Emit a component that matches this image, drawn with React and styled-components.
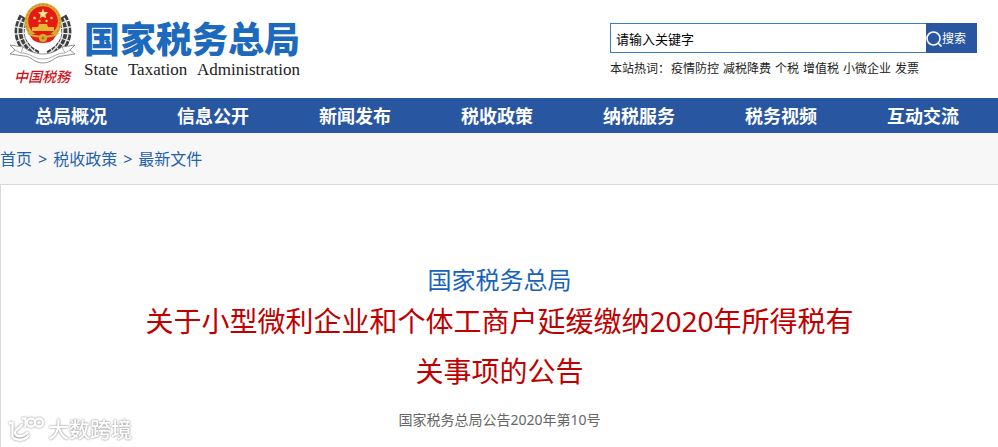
import styled, { createGlobalStyle } from 'styled-components';

const GlobalStyle = createGlobalStyle`
  * {
    box-sizing: border-box;
  }

  body {
    margin: 0;
    background: #fff;
    color: #222;
    font-family: 'Noto Sans', 'Noto Sans CJK SC', sans-serif;
    font-size: 12px;
  }

  a {
    color: inherit;
    text-decoration: none;
  }
`;

const Page = styled.div`
  display: flex;
  flex-direction: column;
  min-height: 100vh;
`;

const Header = styled.header`
  display: flex;
  justify-content: space-between;
  align-items: flex-start;
  height: 98px;
  padding: 0 21px 0 8px;
`;

const Brand = styled.a`
  display: flex;
  gap: 8px;
`;

const Badge = styled.span`
  display: flex;
  flex-direction: column;
  align-items: center;
  width: 68px;
  padding-top: 2px;
`;

const BadgeText = styled.span`
  color: #d0141c;
  font-family: 'Liberation Serif', 'Noto Sans CJK SC', serif;
  font-size: 14px;
  font-style: italic;
  font-weight: 500;
  line-height: 24px;
`;

const BrandText = styled.span`
  display: flex;
  flex-direction: column;
  padding-top: 20px;
`;

const SiteName = styled.span`
  color: #1c69be;
  font-family: 'Liberation Sans', 'Noto Sans CJK SC', sans-serif;
  font-size: 36px;
  font-weight: 900;
  line-height: 41px;
`;

const SiteNameEn = styled.span`
  display: flex;
  justify-content: space-between;
  color: #222;
  font-family: 'Liberation Serif', serif;
  font-size: 17px;
  line-height: 18px;
`;

const SearchArea = styled.div`
  width: 367px;
  padding-top: 23px;
`;

const SearchForm = styled.form`
  display: flex;
  height: 30px;
`;

const SearchInput = styled.input`
  flex: 1;
  min-width: 0;
  padding: 0 5px;
  border: 1px solid #3a80c0;
  border-right: 0;
  border-radius: 0;
  outline: 0;
  color: #000;
  font-family: inherit;
  font-size: 13px;
`;

const SearchButton = styled.button`
  display: flex;
  align-items: center;
  width: 51px;
  padding: 0;
  border: 0;
  background: #2956a1;
  color: #fff;
  font-family: inherit;
  font-size: 12px;
`;

const HotWords = styled.div`
  display: flex;
  gap: 4px;
  padding-top: 7px;
  line-height: 18px;
  white-space: nowrap;
`;

const HotLabel = styled.span`
  margin-right: -3px;
`;

const Nav = styled.nav`
  display: flex;
  height: 35px;
  background: #2956a1;
`;

const NavLink = styled.a`
  padding: 0 35px;
  color: #fff;
  font-size: 18px;
  font-weight: bold;
  line-height: 37px;
  white-space: nowrap;
`;

const Breadcrumb = styled.nav`
  display: flex;
  gap: 6px;
  height: 51px;
  background: #f7f7f7;
  color: #1f62ad;
  font-size: 16px;
  line-height: 52px;
`;

const Article = styled.main`
  flex: 1;
  padding: 79px 140px 16px;
  border: 1px solid #d9d9d9;
  border-width: 1px 0 0 1px;
  text-align: center;
`;

const Issuer = styled.p`
  margin: 0;
  color: #1763ba;
  font-size: 24px;
  line-height: 32px;
`;

const Title = styled.h1`
  margin: 0;
  color: #bf0000;
  font-size: 28px;
  font-weight: normal;
  line-height: 50px;
`;

const DocNumber = styled.p`
  margin: 12px 0 0;
  color: #666;
  font-size: 14px;
  line-height: 24px;
`;

const Watermark = styled.div`
  position: fixed;
  bottom: 4px;
  left: 8px;
  display: flex;
  align-items: center;
  gap: 2px;
  color: #fff;
  font-size: 21px;
  font-weight: 500;
  line-height: 28px;
  text-shadow: 0 0 2px #999, 0 0 2px #aaa;
  pointer-events: none;

  svg {
    filter: drop-shadow(0 0 1px #888);
  }
`;

const hotWords = ['疫情防控', '减税降费', '个税', '增值税', '小微企业', '发票'];

const sections = ['总局概况', '信息公开', '新闻发布', '税收政策', '纳税服务', '税务视频', '互动交流'];

const Emblem = () => (
  <svg width="68" height="64" viewBox="0 0 68 64" aria-hidden="true">
    {/* leaf wreath */}
    <g fill="none" stroke="#3f3f3f" strokeWidth="10" strokeDasharray="5 1">
      <path d="M16 15C8 28 10 45 30 54" />
      <path d="M54 15C62 28 60 45 40 54" />
    </g>
    <g fill="none" stroke="#e4e4e4" strokeWidth="1.500">
      <path d="M14 16C6 28 9 45 28 55M18 17C12 30 15 43 30 52" />
      <path d="M56 16C64 28 61 45 42 55M52 17C58 30 55 43 40 52" />
    </g>
    {/* ribbon */}
    <path
      d="M15 45L2 43l5 5-5 4 14 2c7 0 10 7 19 7s12-7 19-7l13-2-5-4 5-5-13 2c-6 4-11 7-19 7s-14-3-20-7z"
      fill="#fff"
      stroke="#777"
      strokeWidth=".8"
    />
    <path d="M15 45l-2 6-6-3M54 45l3 6 5-3M13 51c10 0 12 6 22 6s12-6 22-6" fill="none" stroke="#999" strokeWidth=".8" />
    {/* national emblem */}
    <ellipse cx="35" cy="20" rx="18.500" ry="19" fill="#d9aa35" />
    <ellipse cx="35" cy="20" rx="17" ry="17.500" fill="none" stroke="#b98520" strokeDasharray="2 2" />
    <circle cx="35" cy="19" r="14.800" fill="#e61a12" />
    <path d="M35 6.500l1.400 3.500 3.700.3-2.800 2.400.9 3.600-3.200-1.900-3.200 1.900.9-3.600-2.800-2.400 3.700-.3z" fill="#ffe98a" />
    <g fill="#ffdc5e">
      <circle cx="26.500" cy="16" r="1.300" />
      <circle cx="43.500" cy="16" r="1.300" />
      <circle cx="31.500" cy="19" r="1.200" />
      <circle cx="38.500" cy="19" r="1.200" />
      <path d="M31 22h8l1 3h6v4H24v-4h6z" fill="#e8b736" />
    </g>
    <path d="M21 32h28l-4 6c-5 4-15 4-20 0z" fill="#df2116" />
    <path d="M20 31c5 5 25 5 30 0" fill="none" stroke="#d9aa35" strokeWidth="2" />
    <circle cx="35" cy="36" r="4" fill="#d9aa35" />
    <circle cx="35" cy="36" r="1.500" fill="#a97516" />
  </svg>
);

const SearchIcon = () => (
  <svg width="16" height="18" viewBox="0 0 16 18" fill="none" stroke="#fff" strokeWidth="1.600" aria-hidden="true">
    <circle cx="7.500" cy="9.500" r="6.500" />
    <path d="M12 14l3.500 3.500" />
  </svg>
);

const WatermarkIcon = () => (
  <svg width="38" height="28" viewBox="0 0 38 28" fill="none" stroke="#fff" strokeWidth="2.300" aria-hidden="true">
    <path d="M1 8h3.500v15" />
    <path d="M14 9c-1 4-7 5-7 8 0 4 6 7 13 0" />
    <path d="M5 23c6 3 12 2 16-3" />
    <path d="M14 3.500h3.500V12" />
    <circle cx="23" cy="7.500" r="4" />
    <circle cx="31" cy="7.500" r="4" />
  </svg>
);

const App = () => {
  return (
    <>
      <GlobalStyle />
      <Page>
        <Header>
          <Brand href="#">
            <Badge>
              <Emblem />
              <BadgeText>中国税務</BadgeText>
            </Badge>
            <BrandText>
              <SiteName>国家税务总局</SiteName>
              <SiteNameEn>
                <span>State</span> <span>Taxation</span> <span>Administration</span>
              </SiteNameEn>
            </BrandText>
          </Brand>
          <SearchArea>
            <SearchForm onSubmit={e => e.preventDefault()}>
              <SearchInput type="text" aria-label="搜索" defaultValue="请输入关键字" />
              <SearchButton type="submit">
                <SearchIcon />
                搜索
              </SearchButton>
            </SearchForm>
            <HotWords>
              <HotLabel>本站热词：</HotLabel>
              {hotWords.map(word => (
                <a href="#" key={word}>{word}</a>
              ))}
            </HotWords>
          </SearchArea>
        </Header>
        <Nav>
          {sections.map(name => (
            <NavLink href="#" key={name}>{name}</NavLink>
          ))}
        </Nav>
        <Breadcrumb>
          <a href="#">首页</a>
          <span>&gt;</span>
          <a href="#">税收政策</a>
          <span>&gt;</span>
          <a href="#">最新文件</a>
        </Breadcrumb>
        <Article>
          <Issuer>国家税务总局</Issuer>
          <Title>关于小型微利企业和个体工商户延缓缴纳2020年所得税有关事项的公告</Title>
          <DocNumber>国家税务总局公告2020年第10号</DocNumber>
        </Article>
      </Page>
      <Watermark>
        <WatermarkIcon />
        大数跨境
      </Watermark>
    </>
  );
};

export default App;
